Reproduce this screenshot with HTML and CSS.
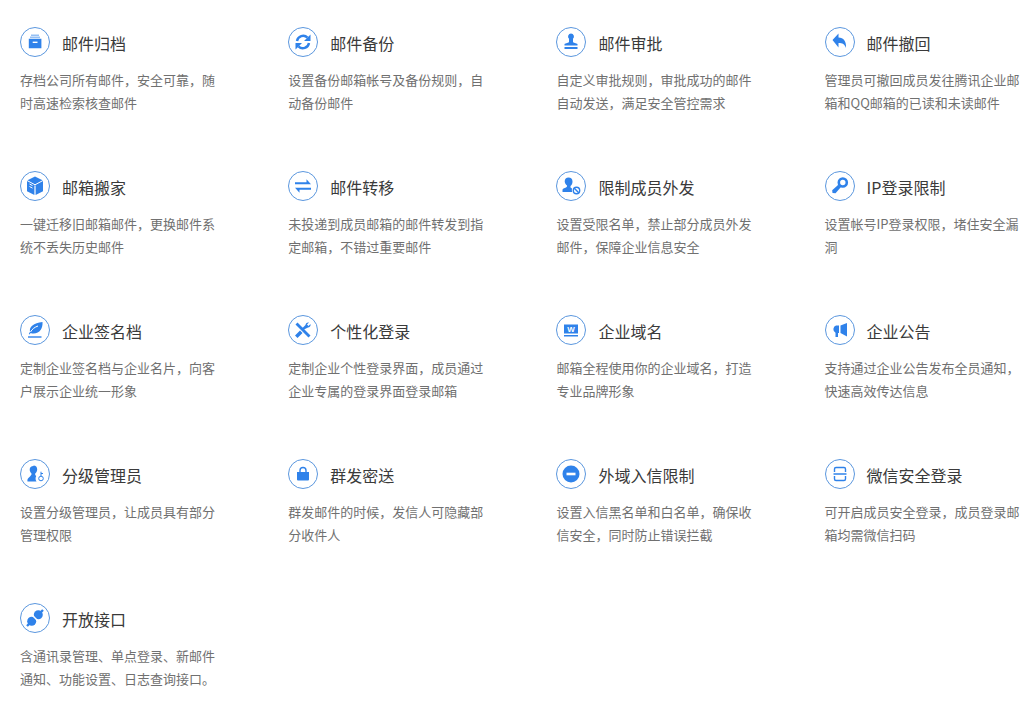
FILE: index.html
```html
<!DOCTYPE html>
<html lang="zh-CN">
<head>
<meta charset="utf-8">
<title>企业邮箱功能</title>
<link rel="stylesheet" href="styles.css">
</head>
<body>
<main class="features">
<article class="feature"><header class="head"><svg class="icon" viewBox="0 0 30 30"><circle class="ring" cx="15" cy="15" r="14.500"/><path class="fill" d="M11 7.700h8v.9h-8zM10 9.700h10v.9H10zM8.800 11.800h12.600v9.500H8.800z"/><path class="cut" d="M12.700 15.300h4.800"/></svg><h2>邮件归档</h2></header><p>存档公司所有邮件，安全可靠，随时高速检索核查邮件</p></article>
<article class="feature"><header class="head"><svg class="icon" viewBox="0 0 30 30"><circle class="ring" cx="15" cy="15" r="14.500"/><path class="line heavy" d="M9 14a6.200 6.200 0 0 1 10.500-3.400M21 16a6.200 6.200 0 0 1-10.500 3.400"/><path class="fill" d="M22.500 7.500v6.500h-6.500zM7.500 22.500V16H14z"/></svg><h2>邮件备份</h2></header><p>设置备份邮箱帐号及备份规则，自动备份邮件</p></article>
<article class="feature"><header class="head"><svg class="icon" viewBox="0 0 30 30"><circle class="ring" cx="15" cy="15" r="14.500"/><path class="fill" d="M15 6.500a3 3 0 0 1 2 5.200v3.300c0 1 3.500 1 4.500 2v1.500h-13V17c1-1 4.500-1 4.500-2v-3.300a3 3 0 0 1 2-5.200zM8.500 20h13v2h-13z"/></svg><h2>邮件审批</h2></header><p>自定义审批规则，审批成功的邮件自动发送，满足安全管控需求</p></article>
<article class="feature"><header class="head"><svg class="icon" viewBox="0 0 30 30"><circle class="ring" cx="15" cy="15" r="14.500"/><path class="fill" d="M13.500 6.500v4c5 .2 8 3.500 7.500 10.500-1.200-3.700-3.500-5-7.500-5v4.500L7.500 13z"/></svg><h2>邮件撤回</h2></header><p>管理员可撤回成员发往腾讯企业邮箱和QQ邮箱的已读和未读邮件</p></article>

<article class="feature"><header class="head"><svg class="icon" viewBox="0 0 30 30"><circle class="ring" cx="15" cy="15" r="14.500"/><path class="fill" d="M15 5.500l8 4v10.800L15.600 24V14.500h-1.200V24L7 20.300V9.500z"/><path class="cut thin" d="M7 9.500l8 4.300 8-4.300M9.500 13l3 1.600M9.500 15.500l3 1.600"/></svg><h2>邮箱搬家</h2></header><p>一键迁移旧邮箱邮件，更换邮件系统不丢失历史邮件</p></article>
<article class="feature"><header class="head"><svg class="icon" viewBox="0 0 30 30"><circle class="ring" cx="15" cy="15" r="14.500"/><path class="fill" d="M7 11.300h11.500V8.300l4.500 5H7zM23 18.700H11.500v3l-4.500-5h16z"/></svg><h2>邮件转移</h2></header><p>未投递到成员邮箱的邮件转发到指定邮箱，不错过重要邮件</p></article>
<article class="feature"><header class="head"><svg class="icon" viewBox="0 0 30 30"><circle class="ring" cx="15" cy="15" r="14.500"/><path class="fill" d="M12.500 6.500c2.500 0 4 1.500 4 4 0 2-.8 3.500-2 4.500v1.500l1.500 1a6 6 0 0 0 .2 3.500H6.500v-2.500c1-1.500 3.500-1.500 4.500-3v-1c-1.200-1-2.300-2.500-2.300-4 0-2.500 1.500-4 3.800-4z"/><circle class="line medium" cx="20.500" cy="19.500" r="3.200"/><path class="line medium" d="M18.300 17.300l4.400 4.400"/></svg><h2>限制成员外发</h2></header><p>设置受限名单，禁止部分成员外发邮件，保障企业信息安全</p></article>
<article class="feature"><header class="head"><svg class="icon" viewBox="0 0 30 30"><circle class="ring" cx="15" cy="15" r="14.500"/><circle class="line wide" cx="17.800" cy="11.500" r="4"/><path class="fill" d="M13.300 13.700l2.500 2.500-5.300 6-3-.3-.3-2.700z"/></svg><h2>IP登录限制</h2></header><p>设置帐号IP登录权限，堵住安全漏洞</p></article>

<article class="feature"><header class="head"><svg class="icon" viewBox="0 0 30 30"><circle class="ring" cx="15" cy="15" r="14.500"/><path class="fill" d="M22.500 7c.5 6-2.500 11.500-9 11.500-1 0-2-.2-2.800-.6L9.500 19.500 8.800 19l1.200-2.300C9 12 13.500 8 22.500 7z"/><path class="cut thin" d="M10.500 17c1.500-2.800 4-4.800 7.500-6"/><path class="line medium" d="M8 22h13.500"/></svg><h2>企业签名档</h2></header><p>定制企业签名档与企业名片，向客户展示企业统一形象</p></article>
<article class="feature"><header class="head"><svg class="icon" viewBox="0 0 30 30"><circle class="ring" cx="15" cy="15" r="14.500"/><path class="fill" d="M7.500 9.500l2-2 13 13-2 2zM16 14.500l-1.500-1.500 3-3c0-1.500 1.500-3 3.500-2.500l-2 2 1.500 1.500 2-2c.5 2-1 3.500-2.500 3.500l-1 .5zM7 20.500l5-5 2.500 2.500-5 5z"/></svg><h2>个性化登录</h2></header><p>定制企业个性登录界面，成员通过企业专属的登录界面登录邮箱</p></article>
<article class="feature"><header class="head"><svg class="icon" viewBox="0 0 30 30"><circle class="ring" cx="15" cy="15" r="14.500"/><path class="fill" d="M8 9.500h14v9H8zM8 20h14v1.500H8z"/><text class="glyph" x="15" y="16.500">W</text></svg><h2>企业域名</h2></header><p>邮箱全程使用你的企业域名，打造专业品牌形象</p></article>
<article class="feature"><header class="head"><svg class="icon" viewBox="0 0 30 30"><circle class="ring" cx="15" cy="15" r="14.500"/><path class="fill" d="M14 10.500v7.500h-1v4h-2.500v-4.200A4 4 0 0 1 11 10.500zM15.500 10.500L22 8v13.500L15.500 18z"/></svg><h2>企业公告</h2></header><p>支持通过企业公告发布全员通知，快速高效传达信息</p></article>

<article class="feature"><header class="head"><svg class="icon" viewBox="0 0 30 30"><circle class="ring" cx="15" cy="15" r="14.500"/><path class="fill" d="M13.500 6.500c2.300 0 3.700 1.500 3.700 3.700 0 1.800-.8 3.300-2 4.300v1.500l1 1c-1 2-.8 4 .3 5.500H7.500c-.5-2 .5-3.500 2.500-5l1.500-2v-1c-1-1-1.800-2.300-1.800-3.800 0-2.500 1.500-3.700 3.800-3.700z"/><circle class="line thin" cx="21" cy="19.500" r="2.300"/><path class="line thin" d="M21 17.200v-4.500M21 14.500h2"/></svg><h2>分级管理员</h2></header><p>设置分级管理员，让成员具有部分管理权限</p></article>
<article class="feature"><header class="head"><svg class="icon" viewBox="0 0 30 30"><circle class="ring" cx="15" cy="15" r="14.500"/><path class="fill" d="M9 13h12v7.500a1 1 0 0 1-1 1H10a1 1 0 0 1-1-1z"/><path class="line medium" d="M12 13v-1.500a3 3 0 0 1 6 0V13"/></svg><h2>群发密送</h2></header><p>群发邮件的时候，发信人可隐藏部分收件人</p></article>
<article class="feature"><header class="head"><svg class="icon" viewBox="0 0 30 30"><circle class="ring" cx="15" cy="15" r="14.500"/><circle class="fill" cx="15" cy="15" r="8.500"/><path class="cut wide" d="M10.500 15h9"/></svg><h2>外域入信限制</h2></header><p>设置入信黑名单和白名单，确保收信安全，同时防止错误拦截</p></article>
<article class="feature"><header class="head"><svg class="icon" viewBox="0 0 30 30"><circle class="ring" cx="15" cy="15" r="14.500"/><path class="line medium" d="M9.500 13v-3a1.500 1.500 0 0 1 1.500-1.500h8a1.500 1.500 0 0 1 1.500 1.500v3M9.500 17v3a1.500 1.500 0 0 0 1.500 1.500h8a1.500 1.500 0 0 0 1.500-1.500v-3M8.500 15h13"/></svg><h2>微信安全登录</h2></header><p>可开启成员安全登录，成员登录邮箱均需微信扫码</p></article>

<article class="feature"><header class="head"><svg class="icon" viewBox="0 0 30 30"><circle class="ring" cx="15" cy="15" r="14.500"/><circle class="fill" cx="18.300" cy="11.700" r="4.500"/><circle class="fill" cx="11.700" cy="18.300" r="4.500"/><path class="line heavy" d="M20 10l3-3M10 20l-3 3"/><path class="cut" d="M11.500 11.500l7 7"/></svg><h2>开放接口</h2></header><p>含通讯录管理、单点登录、新邮件通知、功能设置、日志查询接口。</p></article>
</main>
</body>
</html>
```
FILE: styles.css
```css
html, body {
  margin: 0;
  background: #fff;
}
.features {
  display: grid;
  grid-template-columns: repeat(4, 200px);
  column-gap: 68.2px;
  row-gap: 57px;
  padding: 27px 0 0 20px;
  font-family: "Noto Sans CJK SC", "Liberation Sans", sans-serif;
}
.head {
  display: flex;
  align-items: center;
  gap: 12px;
  height: 30px;
  margin-bottom: 11px;
}
.head h2 {
  margin: 1px 0 0;
  font-size: 16px;
  font-weight: 400;
  line-height: 24px;
  color: #3a3a3a;
}
.feature p {
  margin: 0;
  font-size: 13px;
  line-height: 23px;
  color: #707070;
}
.icon {
  width: 30px;
  height: 30px;
  flex: none;
}
.ring {
  fill: #fff;
  stroke: #5b97de;
  stroke-width: 1;
}
.fill { fill: #2f82ea; }
.line {
  fill: none;
  stroke: #2f82ea;
  stroke-width: 2;
}
.cut {
  fill: none;
  stroke: #fff;
  stroke-width: 1.400;
}
.thin { stroke-width: 1; }
.medium { stroke-width: 1.400; }
.heavy { stroke-width: 2.400; }
.wide { stroke-width: 2.600; }
.glyph {
  fill: #fff;
  font: 700 8px "Liberation Sans", sans-serif;
  text-anchor: middle;
}
```
